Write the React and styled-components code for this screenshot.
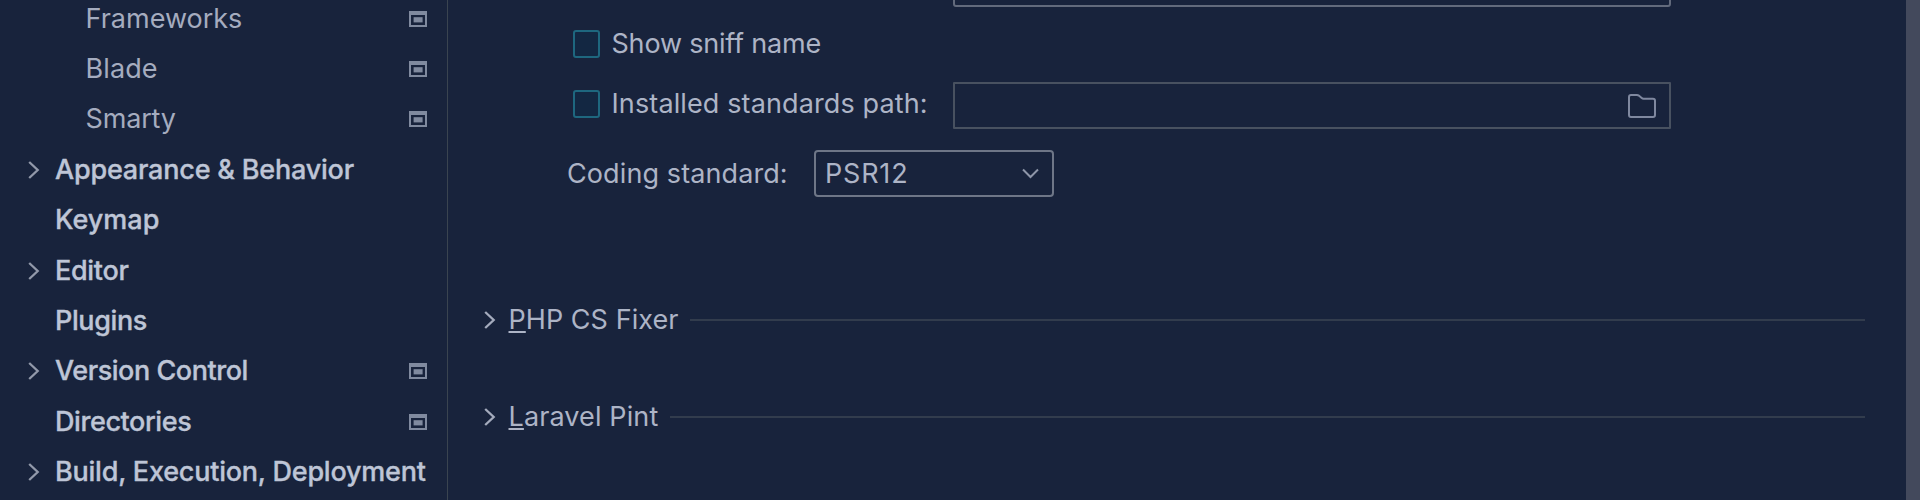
import React from "react";
import styled, { createGlobalStyle } from "styled-components";

const GlobalStyle = createGlobalStyle`
  * { box-sizing: border-box; }
  body {
    margin: 0;
    background: #18233c;
    font-family: Inter, "Liberation Sans", sans-serif;
    font-size: 27px;
    line-height: 32px;
    color: #adb4c6;
  }
`;

const Window = styled.div`
  display: flex;
  width: 1920px;
  height: 500px;
  overflow: hidden;
`;

const Sidebar = styled.nav`
  width: 448px;
  flex: none;
  margin-top: -6.7px;
  border-right: 1px solid #3a4450;
`;

const Row = styled.div`
  display: flex;
  align-items: center;
  height: 50.43px;
  padding: 0 20px 0 ${(p) => (p.$nested ? 85.5 : 28)}px;
  color: ${(p) => (p.$nested ? "#a5acbf" : "#bec5d6")};
  font-weight: ${(p) => (p.$nested ? 400 : 500)};
`;

const ArrowSlot = styled.span`
  display: flex;
  width: 27px;
  flex: none;
`;

const Label = styled.span`
  flex: ${(p) => (p.$grow ? 1 : "none")};
  min-width: 0;
  white-space: nowrap;
  letter-spacing: ${(p) => p.$track || 0}px;
  -webkit-text-stroke: ${(p) => (p.$heavy ? "0.35px currentColor" : "0")};
`;

const Mnemonic = styled.span`
  text-decoration: underline;
  text-decoration-thickness: 2px;
  text-underline-offset: 2px;
  text-decoration-skip-ink: none;
`;

const Main = styled.main`
  flex: 1;
  min-width: 0;
`;

const Fields = styled.section`
  display: flex;
  flex-direction: column;
  padding-left: 119px;
`;

const TextField = styled.div`
  display: flex;
  align-items: center;
  justify-content: flex-end;
  width: 718px;
  height: 47px;
  padding-right: 13px;
  border: 2px solid ${(p) => (p.$strong ? "#626a7c" : "#485160")};
  border-radius: ${(p) => (p.$strong ? 3 : 1)}px;
`;

const ClippedRow = styled.div`
  margin: -40px 0 0 386px;
`;

const CheckRow = styled.div`
  display: flex;
  align-items: center;
  height: ${(p) => p.$height}px;
  margin-top: ${(p) => p.$gap}px;
  padding-left: 6px;
`;

const CheckOption = styled.div`
  display: flex;
  align-items: center;
  width: ${(p) => (p.$width ? `${p.$width}px` : "auto")};
  flex: none;
  margin-bottom: ${(p) => p.$lift || 0}px;
`;

const Checkbox = styled.span`
  width: 27px;
  height: 28px;
  flex: none;
  margin-right: 11.5px;
  border: 2px solid #1e677f;
  border-radius: 3px;
  background: #132742;
`;

const SelectRow = styled.div`
  display: flex;
  align-items: center;
  height: 47px;
  margin-top: 21px;
`;

const SelectLabel = styled.div`
  width: 246.5px;
  flex: none;
`;

const Select = styled.div`
  display: flex;
  align-items: center;
  justify-content: space-between;
  width: 240px;
  height: 47px;
  padding: 0 13px 0 9.5px;
  border: 2px solid #6e7687;
  border-radius: 4px;
`;

const Groups = styled.section`
  margin-top: 97px;
`;

const Group = styled.div`
  display: flex;
  align-items: center;
  height: 52px;
  margin-bottom: 45px;
  padding: 0 41px 0 36px;
`;

const GroupArrow = styled.span`
  display: flex;
  width: 24.5px;
  flex: none;
`;

const Rule = styled.div`
  flex: 1;
  height: 2px;
  margin-left: ${(p) => p.$gap}px;
  background: #323c4d;
`;

const ScrollTrack = styled.div`
  width: 14px;
  flex: none;
  background: #43495c;
`;

const Arrow = ({ color = "#9299aa" }) => (
  <svg width="12" height="20" viewBox="0 0 12 20" fill="none">
    <path d="M1.2 2 L9.7 10 L1.2 18" stroke={color} strokeWidth="2.3" />
  </svg>
);

const ProjectIcon = () => (
  <svg width="18" height="16" viewBox="0 0 18 16">
    <path fillRule="evenodd" fill="#808a9f" d="M0 0H18V16H0Z M2 4V14H16V4Z" />
    <rect x="4.6" y="6.2" width="9" height="5.2" fill="#808a9f" />
  </svg>
);

const FolderIcon = () => (
  <svg width="28" height="24" viewBox="0 0 28 24" fill="none">
    <path
      d="M1 3 Q1 1 3 1 H9 Q10 1 10.8 1.6 L13.7 4 Q14.5 4.7 15.6 4.7 H25 Q27 4.7 27 6.7 V21 Q27 23 25 23 H3 Q1 23 1 21 Z"
      stroke="#7f889f"
      strokeWidth="2"
    />
  </svg>
);

const ChevronDown = () => (
  <svg width="17" height="11" viewBox="0 0 17 11" fill="none">
    <path d="M1 1.5 L8.5 9 L16 1.5" stroke="#8e96a9" strokeWidth="2" />
  </svg>
);

const tree = [
  { label: "Frameworks", nested: true, icon: true },
  { label: "Blade", nested: true, icon: true, track: 0.1 },
  { label: "Smarty", nested: true, icon: true, track: -0.15 },
  { label: "Appearance & Behavior", arrow: true, track: -0.2 },
  { label: "Keymap", track: 0 },
  { label: "Editor", arrow: true, track: -0.3 },
  { label: "Plugins", track: -0.4 },
  { label: "Version Control", arrow: true, icon: true, track: -0.45 },
  { label: "Directories", icon: true, track: -0.42 },
  { label: "Build, Execution, Deployment", arrow: true, track: -0.22 },
];

const groups = [
  { first: "P", rest: "HP CS Fixer", track: 0.05, gap: 11.5 },
  { first: "L", rest: "aravel Pint", track: 0.12, gap: 11.5 },
];

export default function App() {
  return (
    <>
      <GlobalStyle />
      <Window>
        <Sidebar>
          {tree.map((item) => (
            <Row key={item.label} $nested={item.nested}>
              {!item.nested && <ArrowSlot>{item.arrow && <Arrow />}</ArrowSlot>}
              <Label $grow $heavy={!item.nested} $track={item.track}>
                {item.label}
              </Label>
              {item.icon && <ProjectIcon />}
            </Row>
          ))}
        </Sidebar>
        <Main>
          <Fields>
            <ClippedRow>
              <TextField $strong />
            </ClippedRow>
            <CheckRow $height={30} $gap={22}>
              <CheckOption>
                <Checkbox />
                <Label $track={-0.2}>Show sniff name</Label>
              </CheckOption>
            </CheckRow>
            <CheckRow $height={47} $gap={23}>
              <CheckOption $width={380} $lift={3}>
                <Checkbox />
                <Label $track={0.12}>Installed standards path:</Label>
              </CheckOption>
              <TextField>
                <FolderIcon />
              </TextField>
            </CheckRow>
            <SelectRow>
              <SelectLabel>
                <Label $track={0.1}>Coding standard:</Label>
              </SelectLabel>
              <Select>
                <Label $track={0.8}>PSR12</Label>
                <ChevronDown />
              </Select>
            </SelectRow>
          </Fields>
          <Groups>
            {groups.map((g) => (
              <Group key={g.rest}>
                <GroupArrow>
                  <Arrow color="#a4abbd" />
                </GroupArrow>
                <Label $track={g.track}>
                  <Mnemonic>{g.first}</Mnemonic>
                  {g.rest}
                </Label>
                <Rule $gap={g.gap} />
              </Group>
            ))}
          </Groups>
        </Main>
        <ScrollTrack />
      </Window>
    </>
  );
}
